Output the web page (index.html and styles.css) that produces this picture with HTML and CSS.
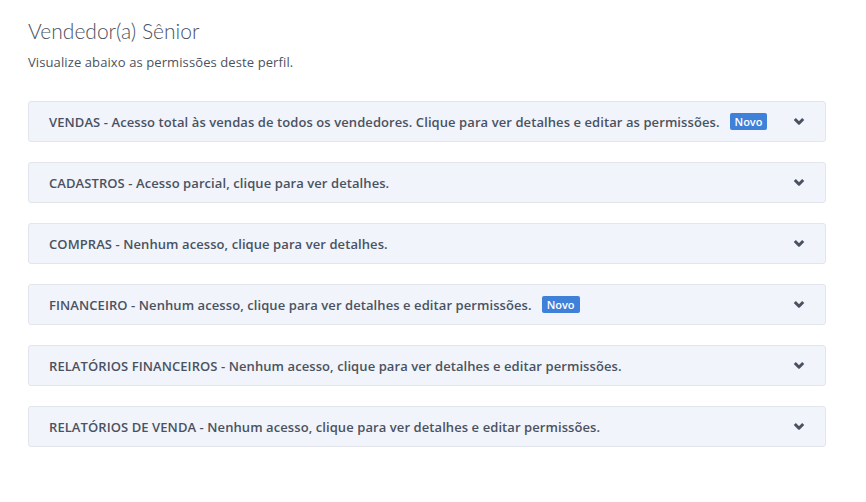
FILE: index.html
```html
<!DOCTYPE html>
<html lang="pt-BR">
<head>
<meta charset="utf-8">
<link rel="stylesheet" href="styles.css">
</head>
<body>
<main class="page">
  <h1 class="title">Vendedor(a) Sênior</h1>
  <p class="subtitle">Visualize abaixo as permissões deste perfil.</p>
  <div class="list">
    <div class="panel"><span class="label">VENDAS - Acesso total às vendas de todos os vendedores. Clique para ver detalhes e editar as permissões.</span><span class="badge">Novo</span><span class="spacer"></span><svg class="chev" viewBox="0 0 12 9" width="12" height="9"><path d="M1.8 2 L6 6.2 L10.2 2" fill="none" stroke="currentColor" stroke-width="3" stroke-linejoin="round"/></svg></div>
    <div class="panel"><span class="label">CADASTROS - Acesso parcial, clique para ver detalhes.</span><span class="spacer"></span><svg class="chev" viewBox="0 0 12 9" width="12" height="9"><path d="M1.8 2 L6 6.2 L10.2 2" fill="none" stroke="currentColor" stroke-width="3" stroke-linejoin="round"/></svg></div>
    <div class="panel"><span class="label">COMPRAS - Nenhum acesso, clique para ver detalhes.</span><span class="spacer"></span><svg class="chev" viewBox="0 0 12 9" width="12" height="9"><path d="M1.8 2 L6 6.2 L10.2 2" fill="none" stroke="currentColor" stroke-width="3" stroke-linejoin="round"/></svg></div>
    <div class="panel"><span class="label">FINANCEIRO - Nenhum acesso, clique para ver detalhes e editar permissões.</span><span class="badge">Novo</span><span class="spacer"></span><svg class="chev" viewBox="0 0 12 9" width="12" height="9"><path d="M1.8 2 L6 6.2 L10.2 2" fill="none" stroke="currentColor" stroke-width="3" stroke-linejoin="round"/></svg></div>
    <div class="panel"><span class="label">RELATÓRIOS FINANCEIROS - Nenhum acesso, clique para ver detalhes e editar permissões.</span><span class="spacer"></span><svg class="chev" viewBox="0 0 12 9" width="12" height="9"><path d="M1.8 2 L6 6.2 L10.2 2" fill="none" stroke="currentColor" stroke-width="3" stroke-linejoin="round"/></svg></div>
    <div class="panel"><span class="label">RELATÓRIOS DE VENDA - Nenhum acesso, clique para ver detalhes e editar permissões.</span><span class="spacer"></span><svg class="chev" viewBox="0 0 12 9" width="12" height="9"><path d="M1.8 2 L6 6.2 L10.2 2" fill="none" stroke="currentColor" stroke-width="3" stroke-linejoin="round"/></svg></div>
  </div>
</main>
</body>
</html>
```
FILE: styles.css
```css
html, body {
  margin: 0;
  padding: 0;
  background: #ffffff;
}
body {
  font-family: "Open Sans", Lato, sans-serif;
  color: #4a5261;
}
.page {
  padding: 18px 40px 0 28px;
}
.title {
  margin: 0;
  font-family: Lato, "Open Sans", sans-serif;
  font-size: 21px;
  font-weight: 300;
  line-height: 26px;
  color: #4a5261;
}
.subtitle {
  margin: 10px 0 0 0;
  font-size: 13px;
  letter-spacing: 0.1px;
  line-height: 16px;
  color: #4a5261;
}
.list {
  margin-top: 31px;
  display: flex;
  flex-direction: column;
  gap: 20px;
  width: 798px;
}
.panel {
  box-sizing: border-box;
  height: 41px;
  display: flex;
  align-items: center;
  padding: 0 20px 0 20px;
  background: #f1f4fb;
  border: 1px solid #e2e5eb;
  border-radius: 3px;
}
.label {
  font-size: 13px;
  font-weight: 600;
  letter-spacing: 0.08px;
  color: #4a5261;
  white-space: nowrap;
}
.badge {
  margin-left: 10px;
  background: #3f80d9;
  color: #ffffff;
  font-size: 11px;
  font-weight: 600;
  line-height: 17px;
  padding: 0 5px;
  border-radius: 2px;
}
.spacer {
  flex: 1;
}
.chev {
  color: #4a5261;
}
```
